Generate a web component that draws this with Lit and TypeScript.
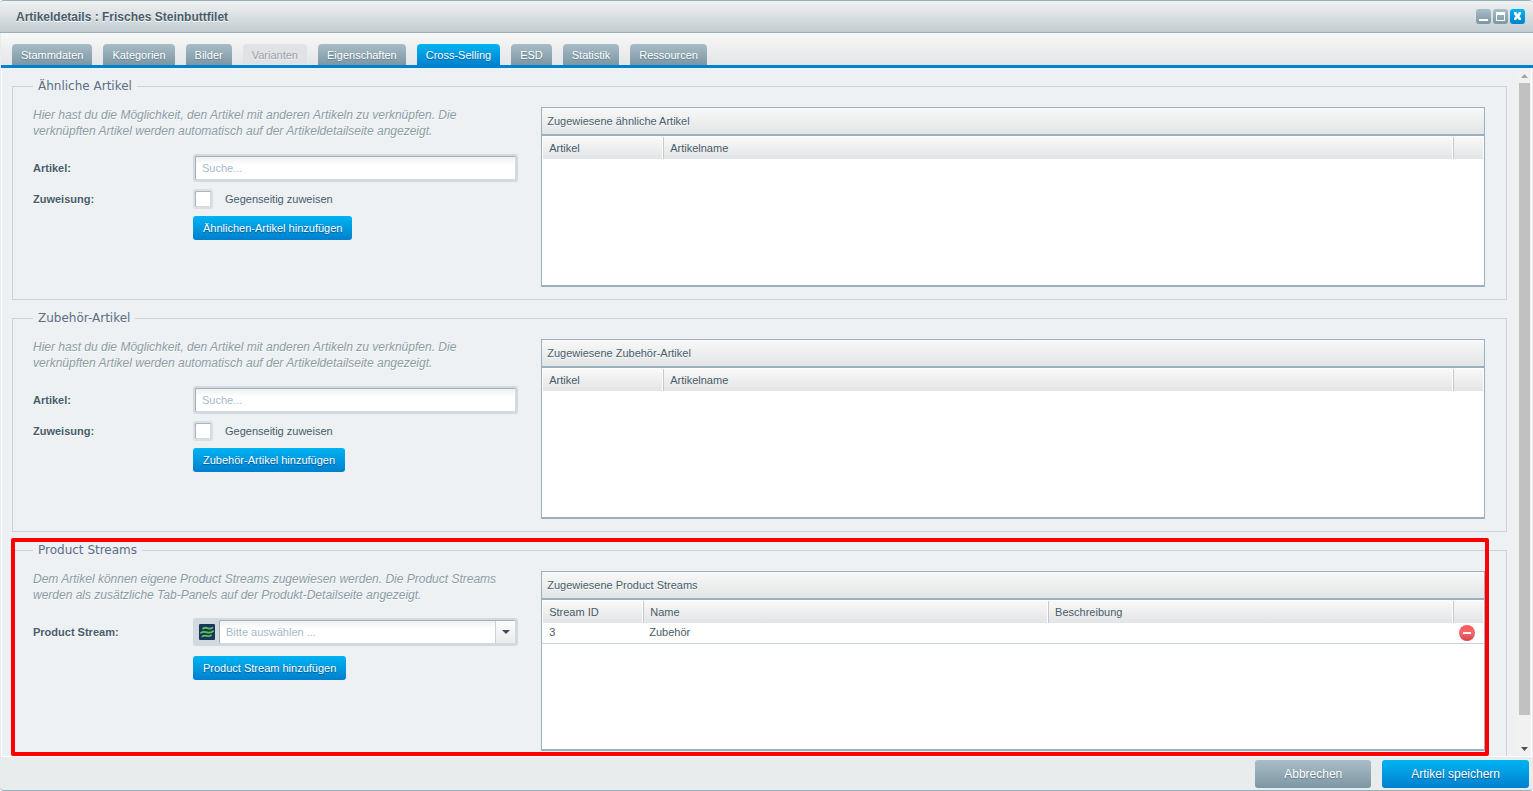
import { LitElement, html, css, svg } from "lit";
import { customElement, property, state } from "lit/decorators.js";

interface Tab {
  label: string;
  disabled?: boolean;
}

interface Column {
  label: string;
  kind: "code" | "id" | "fluid" | "action";
}

const TABS: Tab[] = [
  { label: "Stammdaten" },
  { label: "Kategorien" },
  { label: "Bilder" },
  { label: "Varianten", disabled: true },
  { label: "Eigenschaften" },
  { label: "Cross-Selling" },
  { label: "ESD" },
  { label: "Statistik" },
  { label: "Ressourcen" },
];

const ARTICLE_COLUMNS: Column[] = [
  { label: "Artikel", kind: "code" },
  { label: "Artikelname", kind: "fluid" },
  { label: "", kind: "action" },
];

const STREAM_COLUMNS: Column[] = [
  { label: "Stream ID", kind: "id" },
  { label: "Name", kind: "fluid" },
  { label: "Beschreibung", kind: "fluid" },
  { label: "", kind: "action" },
];

const buttonStyles = css`
  button {
    font-family: inherit;
    cursor: pointer;
  }
  .btn {
    border: 0;
    border-radius: 3px;
    color: #fff;
    font-size: 11px;
    line-height: 24px;
    padding: 0 10px;
    white-space: nowrap;
  }
  .primary {
    background: linear-gradient(#00b4f3, #007fcd);
    text-shadow: 0 1px 1px #00528a;
  }
  .secondary {
    background: linear-gradient(#aabdc7, #7c97a4);
    text-shadow: 0 1px 1px #5d7783;
  }
`;

@customElement("assignment-grid")
export class AssignmentGrid extends LitElement {
  @property() caption = "";
  @property({ attribute: false }) columns: Column[] = [];
  @property({ attribute: false }) rows: string[][] = [];

  static styles = css`
    :host {
      display: flex;
      flex-direction: column;
      box-sizing: border-box;
      min-height: 180px;
      border: 1px solid #9ab0bc;
      border-bottom-width: 2px;
      background: #fff;
      color: #475c6a;
      font-size: 11px;
    }
    .caption {
      padding: 0 5px;
      line-height: 26px;
      border-bottom: 2px solid #9ab0bc;
      background: linear-gradient(#f8f8f8, #e2e4e6);
      text-shadow: 0 1px 0 #fff;
    }
    table {
      width: 100%;
      table-layout: fixed;
      border-collapse: separate;
      border-spacing: 0;
    }
    th {
      box-sizing: border-box;
      height: 23px;
      padding: 0 7px;
      border: 0 solid #fff;
      border-width: 1px 1px 0 0;
      background: linear-gradient(#f9f9f9, #e3e4e6) padding-box;
      box-shadow: inset 1px 0 0 #c3c8cc;
      font-weight: normal;
      text-align: left;
    }
    th:first-child {
      padding-left: 6px;
      border-left-width: 1px;
      box-shadow: none;
    }
    td {
      box-sizing: border-box;
      height: 21px;
      padding: 0 6px;
      border-bottom: 1px solid #c9d3d8;
      line-height: 18px;
      vertical-align: top;
    }
    td:first-child {
      padding-left: 7px;
    }
    .code {
      width: 121px;
    }
    .id {
      width: 101px;
    }
    .action {
      width: 31px;
    }
    .tools {
      padding: 1px 0 0 5px;
    }
    .remove {
      display: block;
      width: 18px;
      height: 18px;
      padding: 1px;
      border: 0;
      background: none;
      cursor: pointer;
    }
    .remove svg {
      display: block;
    }
  `;

  render() {
    return html`
      <div class="caption" id="caption">${this.caption}</div>
      <table aria-labelledby="caption">
        <thead>
          <tr>
            ${this.columns.map((c) => html`<th class=${c.kind} scope="col">${c.label}</th>`)}
          </tr>
        </thead>
        <tbody>
          ${this.rows.map(
            (row) => html`<tr>
              ${row.map((cell) => html`<td>${cell}</td>`)}
              <td class="tools">
                <button class="remove" aria-label="Entfernen">
                  <svg width="16" height="16" viewBox="0 0 16 16">
                    <defs>
                      <linearGradient id="red" x1="0" y1="0" x2="0" y2="1">
                        <stop offset="0" stop-color="#fb5558" />
                        <stop offset="0.5" stop-color="#f3696c" />
                        <stop offset="1" stop-color="#d93f42" />
                      </linearGradient>
                    </defs>
                    <circle cx="8" cy="8" r="8" fill="url(#red)" />
                    <rect x="4" y="7" width="8" height="2" rx="0.5" fill="#fff" />
                  </svg>
                </button>
              </td>
            </tr>`
          )}
        </tbody>
      </table>
    `;
  }
}

@customElement("cross-selling-section")
export class CrossSellingSection extends LitElement {
  @property() heading = "";
  @property() description = "";
  @property() caption = "";
  @property() action = "";
  @property({ type: Boolean }) stream = false;
  @property({ attribute: false }) columns: Column[] = [];
  @property({ attribute: false }) rows: string[][] = [];

  static styles = [
    buttonStyles,
    css`
      :host {
        display: block;
      }
      fieldset {
        min-width: 0;
        margin: 0;
        padding: 13px 21px 12px 20px;
        border: 1px solid #c9d2d6;
      }
      legend {
        padding: 0 5px;
        color: #5c6d85;
        font: 12px/15px "DejaVu Sans", sans-serif;
      }
      .columns {
        display: grid;
        grid-template-columns: 35% minmax(0, 1fr);
      }
      .form {
        padding-right: 23px;
      }
      p {
        margin: 0 0 15px;
        color: #8c9ba5;
        font-size: 12px;
        font-style: italic;
        line-height: 16px;
        text-shadow: 0 1px 0 #fff;
      }
      .fields {
        display: grid;
        grid-template-columns: 160px minmax(0, 1fr);
        row-gap: 7px;
        align-items: center;
      }
      .name {
        font-weight: bold;
        text-shadow: 0 1px 0 #fff;
      }
      .box {
        display: flex;
        box-sizing: border-box;
        height: 28px;
        padding: 2px;
        border-radius: 3px;
        background: #d3dadf;
      }
      .text,
      select {
        flex: 1;
        box-sizing: border-box;
        min-width: 0;
        height: 24px;
        margin: 0;
        padding: 0 6px;
        border: 1px solid #a3b0b8;
        border-right-color: #d3dadf;
        border-bottom-color: #d3dadf;
        border-radius: 2px;
        outline: 0;
        background: linear-gradient(#eef2f3, #fff 8px);
        color: #a3bacb;
        font: 11px "Liberation Sans", sans-serif;
      }
      .text::placeholder {
        color: #a3bacb;
        opacity: 1;
      }
      select {
        appearance: none;
      }
      .stream-icon {
        margin: 4px;
        flex: none;
      }
      .combo {
        display: grid;
        flex: 1;
        grid-template-columns: minmax(0, 1fr) 21px;
      }
      .combo select {
        grid-area: 1 / 1 / 2 / 3;
        width: 100%;
      }
      .trigger {
        display: grid;
        grid-area: 1 / 2 / 2 / 3;
        place-items: center;
        margin: 1px 1px 1px 0;
        border-left: 1px solid #c9d2d8;
        background: linear-gradient(#fcfcfc, #e9ecee);
        pointer-events: none;
      }
      .check {
        display: flex;
        align-items: center;
        gap: 12px;
      }
      .check input {
        appearance: none;
        width: 20px;
        height: 20px;
        margin: 0;
        border: 2px solid #d9dfe2;
        border-radius: 3px;
        background: #fff;
        box-shadow: inset 1px 1px 0 #aab5bc, inset -1px -1px 0 #d3d9dd;
      }
      .submit {
        grid-column: 2;
        justify-self: start;
      }
      .submit.after-combo {
        margin-top: 3px;
      }
    `,
  ];

  private renderStreamField() {
    return html`
      <label class="name" for="stream">Product Stream:</label>
      <div class="box">
        <svg class="stream-icon" width="16" height="16" viewBox="0 0 16 16">
          <rect width="16" height="16" rx="1" fill="#17375e" />
          <g fill="none" stroke="#62c24a" stroke-width="1.8" stroke-linecap="round">
            <path d="M4 4.6C6 3 7.4 3.8 9 4.3S12.2 4.6 13.4 3.6" />
            <path d="M2 8.8C4.4 7 6 7.8 8 8.3S12 8.6 14 7.2" />
            <path d="M3.4 12.4C5.2 11 6.6 11.6 8.2 12S11 12.2 12 11.4" />
          </g>
        </svg>
        <div class="combo">
          <select id="stream">
            <option selected>Bitte auswählen ...</option>
            <option>Zubehör</option>
          </select>
          <span class="trigger">
            <svg width="8" height="4" viewBox="0 0 8 4">
              <path d="M0 0h8L4 4z" fill="#3d4e5a" />
            </svg>
          </span>
        </div>
      </div>
    `;
  }

  private renderArticleFields() {
    return html`
      <label class="name" for="article">Artikel:</label>
      <div class="box"><input class="text" id="article" type="text" placeholder="Suche..." /></div>
      <span class="name">Zuweisung:</span>
      <label class="check"><input type="checkbox" />Gegenseitig zuweisen</label>
    `;
  }

  render() {
    return html`
      <fieldset>
        <legend>${this.heading}</legend>
        <div class="columns">
          <div class="form">
            <p>${this.description}</p>
            <div class="fields">
              ${this.stream ? this.renderStreamField() : this.renderArticleFields()}
              <button class="btn primary submit ${this.stream ? "after-combo" : ""}">${this.action}</button>
            </div>
          </div>
          <assignment-grid
            .caption=${this.caption}
            .columns=${this.columns}
            .rows=${this.rows}
          ></assignment-grid>
        </div>
      </fieldset>
    `;
  }
}

@customElement("app-root")
export class AppRoot extends LitElement {
  @state() private active = "Cross-Selling";

  static styles = [
    buttonStyles,
    css`
      :host {
        display: flex;
        flex-direction: column;
        box-sizing: border-box;
        height: 100vh;
        overflow: hidden;
        border-top: 1px solid #98afbc;
        border-bottom: 1px solid #98afbc;
        border-radius: 4px;
        background: #e8eced;
        color: #475c6a;
        font: 11px "Liberation Sans", Arial, sans-serif;
      }
      .titlebar {
        display: flex;
        align-items: center;
        justify-content: space-between;
        height: 31px;
        padding: 0 8px 0 16px;
        border-bottom: 1px solid #98afbc;
        background: linear-gradient(#f1f2f2, #c1ccd2);
      }
      h1 {
        margin: 0;
        font-size: 12px;
        text-shadow: 0 1px 0 #fff;
      }
      .tools {
        display: flex;
        gap: 2px;
      }
      .tool {
        width: 15px;
        height: 15px;
        padding: 0;
        border: 0;
        border-radius: 3px;
      }
      .tool svg {
        display: block;
      }
      .tabs {
        display: flex;
        align-items: flex-end;
        gap: 11px;
        height: 32px;
        padding: 0 11px;
        margin-left: 1px;
        border-bottom: 3px solid #0082cf;
        background: linear-gradient(#f8f8f8, #e4e5e7);
      }
      .tab {
        height: 21px;
        padding: 0 9px;
        border: 0;
        border-radius: 4px 4px 0 0;
        background: linear-gradient(#a9bcc6, #7b97a4);
        color: #fff;
        font-size: 11px;
        line-height: 22px;
        text-shadow: 0 1px 1px #647d89;
      }
      .tab.active {
        background: linear-gradient(#00b4f3, #0082cf);
        text-shadow: 0 1px 1px #005a9c;
      }
      .tab:disabled {
        background: #e0e2e4;
        color: #98a3aa;
        text-shadow: 0 1px 0 #f2f3f4;
        cursor: default;
      }
      .body {
        display: flex;
        flex: 1;
        min-height: 0;
        margin: 0 1px;
        border: 0 solid #fff;
        border-width: 0 1px 1px 1px;
        background: #edf1f4;
      }
      .scroller {
        display: flex;
        flex: 1;
        flex-direction: column;
        gap: 11px;
        min-width: 0;
        padding: 11px 10px;
        overflow: auto;
        scrollbar-width: none;
      }
      .highlighted {
        position: relative;
      }
      .marker {
        position: absolute;
        inset: -5px 18px auto -1px;
        box-sizing: border-box;
        height: 218px;
        border: 4px solid #f00;
        border-radius: 2px;
        pointer-events: none;
      }
      .scrollbar {
        display: grid;
        grid-template-rows: 15px 1fr 15px;
        width: 14px;
        background: #f1f1f1;
      }
      .arrow {
        display: grid;
        place-items: center;
      }
      .thumb {
        width: 11px;
        height: 96%;
        margin: 0 auto;
        background: #c1c1c1;
      }
      footer {
        display: flex;
        justify-content: flex-end;
        gap: 11px;
        padding: 3px 4px 2px;
      }
      footer .btn {
        padding: 0 29px;
        font-size: 12px;
        line-height: 28px;
      }
    `,
  ];

  private toolIcon(shape: unknown) {
    return html`<svg width="15" height="15" viewBox="0 0 15 15">${shape}</svg>`;
  }

  render() {
    const relation =
      "Hier hast du die Möglichkeit, den Artikel mit anderen Artikeln zu verknüpfen. Die verknüpften Artikel werden automatisch auf der Artikeldetailseite angezeigt.";
    return html`
      <header class="titlebar">
        <h1>Artikeldetails : Frisches Steinbuttfilet</h1>
        <div class="tools">
          <button class="tool secondary" aria-label="Minimieren">
            ${this.toolIcon(svg`<path d="M3 10h9v2H3z" fill="#fff" />`)}
          </button>
          <button class="tool secondary" aria-label="Maximieren">
            ${this.toolIcon(svg`<path d="M3 3h9v9H3zM4 6v5h7V6z" fill="#fff" fill-rule="evenodd" />`)}
          </button>
          <button class="tool primary" aria-label="Schließen">
            ${this.toolIcon(
              svg`<path d="M4 3h2.6v1.8h1.8V3H11v2L9.4 7.2 11 9.2V11H8.4V9.4H6.6V11H4V9.2l1.6-2L4 5z" fill="#fff" />`
            )}
          </button>
        </div>
      </header>
      <nav class="tabs" role="tablist">
        ${TABS.map(
          (t) => html`<button
            class="tab ${t.label === this.active ? "active" : ""}"
            role="tab"
            aria-selected=${t.label === this.active ? "true" : "false"}
            ?disabled=${t.disabled ?? false}
            @click=${() => (this.active = t.label)}
          >${t.label}</button>`
        )}
      </nav>
      <main class="body">
        <div class="scroller">
          <cross-selling-section
            heading="Ähnliche Artikel"
            description=${relation}
            caption="Zugewiesene ähnliche Artikel"
            action="Ähnlichen-Artikel hinzufügen"
            .columns=${ARTICLE_COLUMNS}
          ></cross-selling-section>
          <cross-selling-section
            heading="Zubehör-Artikel"
            description=${relation}
            caption="Zugewiesene Zubehör-Artikel"
            action="Zubehör-Artikel hinzufügen"
            .columns=${ARTICLE_COLUMNS}
          ></cross-selling-section>
          <div class="highlighted">
            <cross-selling-section
              stream
              heading="Product Streams"
              description="Dem Artikel können eigene Product Streams zugewiesen werden. Die Product Streams werden als zusätzliche Tab-Panels auf der Produkt-Detailseite angezeigt."
              caption="Zugewiesene Product Streams"
              action="Product Stream hinzufügen"
              .columns=${STREAM_COLUMNS}
              .rows=${[["3", "Zubehör", ""]]}
            ></cross-selling-section>
            <div class="marker"></div>
          </div>
        </div>
        <div class="scrollbar" aria-hidden="true">
          <span class="arrow">
            <svg width="7" height="4" viewBox="0 0 7 4"><path d="M0 4h7L3.5 0z" fill="#a3a3a3" /></svg>
          </span>
          <div><div class="thumb"></div></div>
          <span class="arrow">
            <svg width="7" height="4" viewBox="0 0 7 4"><path d="M0 0h7L3.5 4z" fill="#505050" /></svg>
          </span>
        </div>
      </main>
      <footer>
        <button class="btn secondary">Abbrechen</button>
        <button class="btn primary">Artikel speichern</button>
      </footer>
    `;
  }
}
